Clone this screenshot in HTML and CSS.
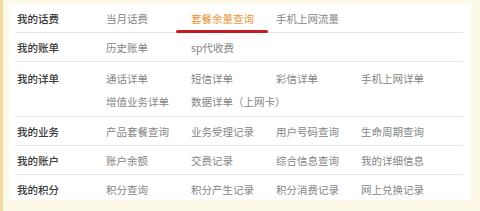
FILE: index.html
```html
<!DOCTYPE html>
<html>
<head>
<meta charset="utf-8">
<link rel="stylesheet" href="styles.css">
</head>
<body>
<div class="frame">
  <div class="panel">
    <div class="row">
      <div class="label">我的话费</div>
      <div class="items">
        <span class="item">当月话费</span>
        <span class="item active">套餐余量查询</span>
        <span class="item">手机上网流量</span>
      </div>
    </div>
    <div class="row">
      <div class="label">我的账单</div>
      <div class="items">
        <span class="item">历史账单</span>
        <span class="item">sp代收费</span>
      </div>
    </div>
    <div class="row tall">
      <div class="label">我的详单</div>
      <div class="items">
        <span class="item">通话详单</span>
        <span class="item">短信详单</span>
        <span class="item">彩信详单</span>
        <span class="item">手机上网详单</span>
        <span class="item">增值业务详单</span>
        <span class="item wide">数据详单（上网卡）</span>
      </div>
    </div>
    <div class="row">
      <div class="label">我的业务</div>
      <div class="items">
        <span class="item">产品套餐查询</span>
        <span class="item">业务受理记录</span>
        <span class="item">用户号码查询</span>
        <span class="item">生命周期查询</span>
      </div>
    </div>
    <div class="row">
      <div class="label">我的账户</div>
      <div class="items">
        <span class="item">账户余额</span>
        <span class="item">交费记录</span>
        <span class="item">综合信息查询</span>
        <span class="item">我的详细信息</span>
      </div>
    </div>
    <div class="row last">
      <div class="label">我的积分</div>
      <div class="items">
        <span class="item">积分查询</span>
        <span class="item">积分产生记录</span>
        <span class="item">积分消费记录</span>
        <span class="item">网上兑换记录</span>
      </div>
    </div>
  </div>
</div>
</body>
</html>
```
FILE: styles.css
```css
html, body {
  margin: 0;
  padding: 0;
}
body {
  width: 480px;
  height: 211px;
  background: #fdf9e9;
  font-family: "Noto Sans CJK SC", "Noto Sans", sans-serif;
  font-size: 10.5px;
  overflow: hidden;
}
.frame {
  height: 211px;
  border-left: 3px solid #f1daa2;
  padding: 4px 9px 0 6px;
  box-sizing: border-box;
}
.panel {
  background: #ffffff;
  padding: 0 8px 0 6px;
  height: 196px;
}
.row {
  display: flex;
  border-bottom: 1px solid #e6e6e6;
  padding: 2.5px 0 2.5px 0;
}
.row.tall {
  padding: 4.5px 0 3.5px 0;
}
.row.last {
  border-bottom: none;
}
.label {
  width: 89px;
  padding-left: 2px;
  line-height: 23px;
  color: #3a3a3a;
  font-weight: 500;
  flex: none;
}
.items {
  display: grid;
  grid-template-columns: repeat(4, 85px);
  line-height: 23px;
}
.item {
  color: #858585;
  white-space: nowrap;
}
.item.active {
  color: #e8953a;
  position: relative;
}
.item.active::after {
  content: "";
  position: absolute;
  left: -15px;
  width: 92px;
  top: 23px;
  height: 3px;
  border-radius: 2px;
  background: #c81a22;
}
.item.wide {
  grid-column: span 2;
}
```
